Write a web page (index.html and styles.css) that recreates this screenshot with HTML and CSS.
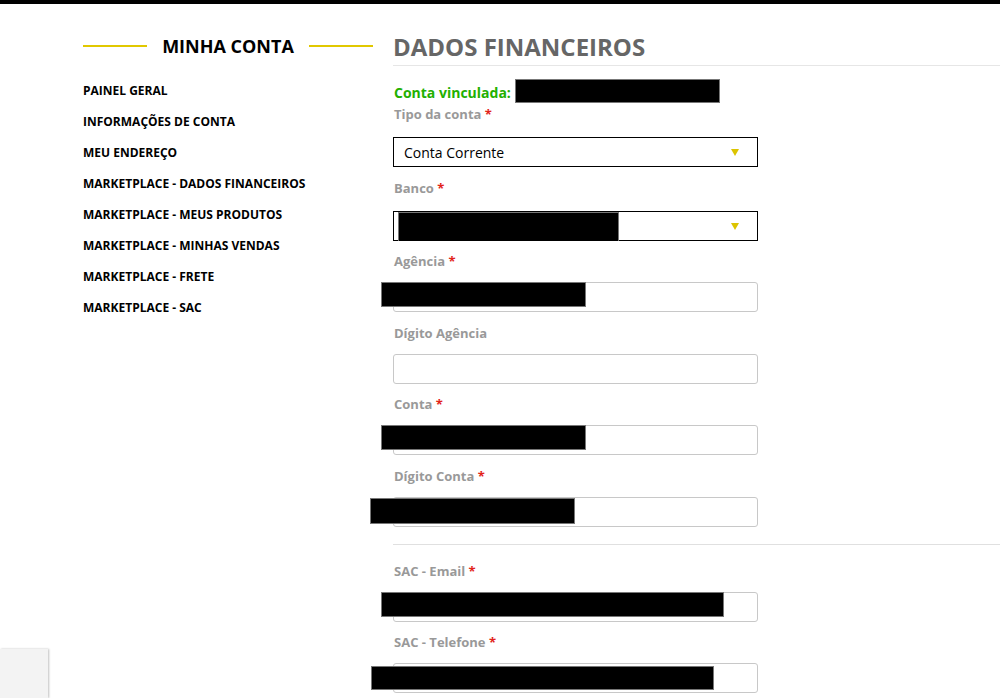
FILE: index.html
```html
<!DOCTYPE html>
<html lang="pt-BR">
<head>
<meta charset="utf-8">
<title>Dados Financeiros</title>
<link rel="stylesheet" href="styles.css">
</head>
<body>
<div class="topbar"></div>
<div class="page">
  <aside class="sidebar">
    <div class="side-title"><span class="rule"></span><h2>MINHA CONTA</h2><span class="rule"></span></div>
    <nav class="side-nav">
      <a href="#">PAINEL GERAL</a>
      <a href="#">INFORMAÇÕES DE CONTA</a>
      <a href="#">MEU ENDEREÇO</a>
      <a href="#">MARKETPLACE - DADOS FINANCEIROS</a>
      <a href="#">MARKETPLACE - MEUS PRODUTOS</a>
      <a href="#">MARKETPLACE - MINHAS VENDAS</a>
      <a href="#">MARKETPLACE - FRETE</a>
      <a href="#">MARKETPLACE - SAC</a>
    </nav>
  </aside>
  <main class="main">
    <h1 class="title">DADOS FINANCEIROS</h1>
    <div class="linked">Conta vinculada: <span class="redact r-linked"></span></div>
    <form class="form">
      <div class="field sel-field">
        <label>Tipo da conta <em>*</em></label>
        <div class="select"><span>Conta Corrente</span><i class="arrow"></i></div>
      </div>
      <div class="field sel-field">
        <label>Banco <em>*</em></label>
        <div class="select"><span></span><i class="arrow"></i><span class="redact r-bank"></span></div>
      </div>
      <div class="field">
        <label>Agência <em>*</em></label>
        <div class="input"><span class="redact r-a"></span></div>
      </div>
      <div class="field">
        <label>Dígito Agência</label>
        <div class="input"></div>
      </div>
      <div class="field">
        <label>Conta <em>*</em></label>
        <div class="input"><span class="redact r-a"></span></div>
      </div>
      <div class="field">
        <label>Dígito Conta <em>*</em></label>
        <div class="input"><span class="redact r-b"></span></div>
      </div>
      <hr class="sep">
      <div class="field">
        <label>SAC - Email <em>*</em></label>
        <div class="input"><span class="redact r-c"></span></div>
      </div>
      <div class="field">
        <label>SAC - Telefone <em>*</em></label>
        <div class="input"><span class="redact r-d"></span></div>
      </div>
    </form>
  </main>
</div>
<div class="float-box"></div>
</body>
</html>
```

FILE: styles.css
```css
* { box-sizing: border-box; }
html, body { margin: 0; padding: 0; background: #fff; }
body { font-family: "Open Sans", "Liberation Sans", sans-serif; color: #000; overflow: hidden; height: 698px; }

.topbar { height: 4px; background: #000; }

.page { display: flex; padding-left: 83px; }

.sidebar { width: 290px; flex: none; padding-top: 26px; }
.side-title { display: flex; align-items: center; height: 32px; }
.side-title .rule { flex: 1; height: 2px; background: #e1c800; }
.side-title h2 { margin: 0 15px; font-size: 18px; font-weight: 700; line-height: 32px; }
.side-nav { display: flex; flex-direction: column; padding-top: 13px; }
.side-nav a { color: #000; text-decoration: none; font-size: 12px; font-weight: 700; line-height: 31px; }

.main { flex: 1; min-width: 0; margin-left: 20px; padding-top: 27px; }
.title { margin: 0; font-size: 24px; font-weight: 700; color: #666; line-height: 32px; padding: 0 0 2px 0; border-bottom: 1px solid #e6e6e6; }

.linked { position: relative; margin: 16px 0 0 1px; font-size: 14px; font-weight: 700; color: #22b000; line-height: 22px; }

.field { position: relative; width: 365px; margin-bottom: 10.5px; }
.field label { display: block; padding-left: 1px; font-size: 13px; font-weight: 700; color: #999; line-height: 20px; margin-bottom: 11px; }
.field label em { font-style: normal; color: #e2231a; }
.sel-field label { margin-bottom: 13px; }

.select { position: relative; display: flex; align-items: center; height: 30px; border: 1px solid #000; padding: 0 10px; font-size: 14px; }
.select .arrow { position: absolute; right: 18px; top: 11px; width: 0; height: 0; border-left: 4px solid transparent; border-right: 4px solid transparent; border-top: 7px solid #dcc400; }
.input { position: relative; height: 30px; border: 1px solid #c8c8c8; border-radius: 3px; }

.sep { margin: 17px 0 16px; border: 0; border-top: 1px solid #e0e0e0; }

.redact { position: absolute; background: #000; border: 1px solid #777; }
.r-linked { left: 121px; top: -3px; width: 205px; height: 24px; }
.r-bank { left: 4px; top: 0; width: 221px; height: 29px; border-bottom: 0; }
.r-a { left: -13px; top: -1px; width: 205px; height: 25px; }
.r-b { left: -24px; top: 0; width: 205px; height: 26px; }
.r-c { left: -13px; top: -1px; width: 343px; height: 25px; }
.r-d { left: -23px; top: 2px; width: 343px; height: 24px; }

.float-box { position: fixed; left: 0; top: 649px; width: 48px; height: 49px; background: #f3f3f3; box-shadow: 1px 0 2px rgba(0,0,0,0.25); }
```
